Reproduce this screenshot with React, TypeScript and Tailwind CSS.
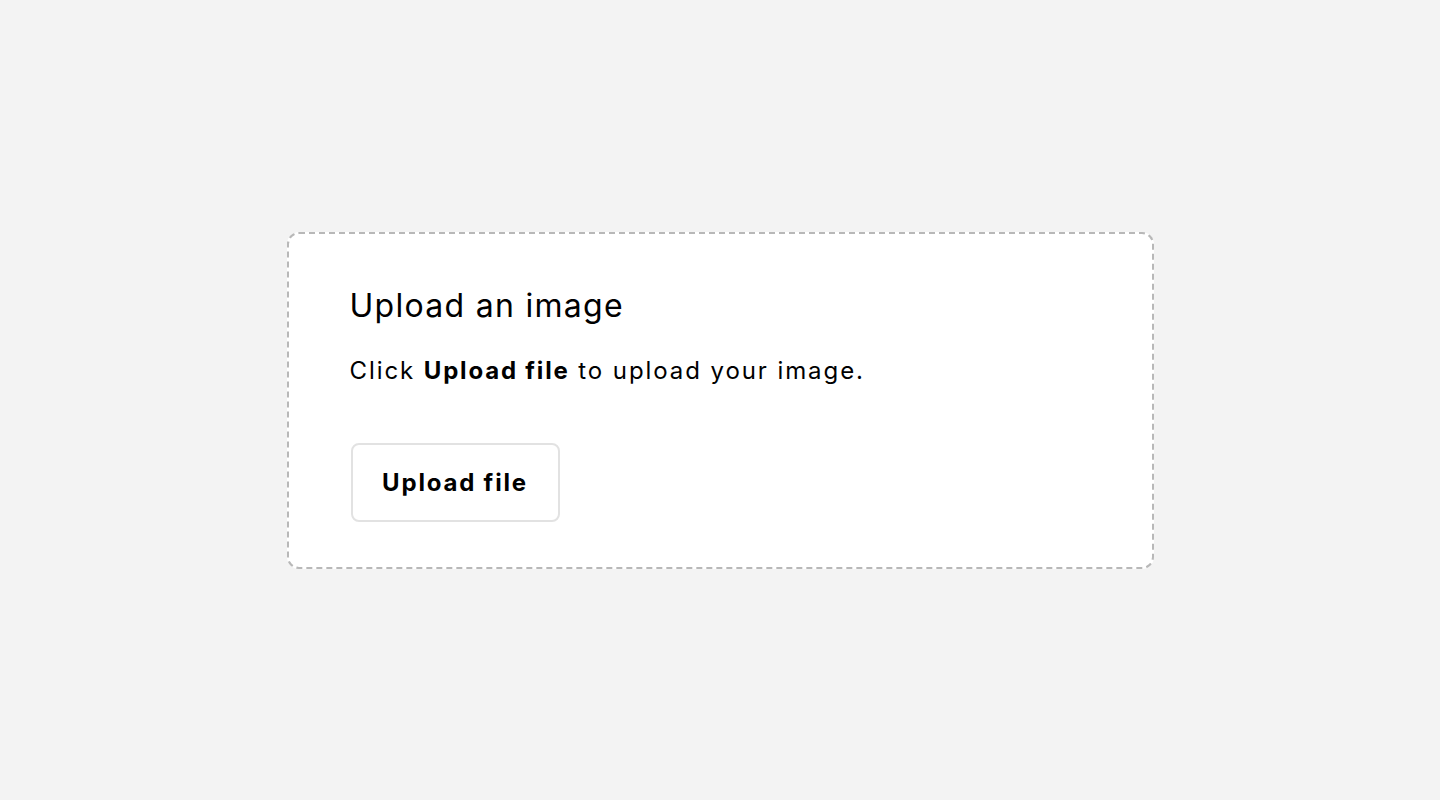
const App = () => {
  return (
    <div className="min-h-screen w-full bg-[#f3f3f3] flex items-center justify-center font-['Inter','Liberation_Sans',sans-serif] text-black">
      <section className="w-[867px] h-[337px] bg-white border-2 border-dashed border-[#b8b8b8] rounded-[12px] px-[62px] pt-[48px] pb-[45px]">
        <h1 className="text-[32px] leading-[48px] font-normal tracking-[0.04em] -ml-px">Upload an image</h1>
        <p className="mt-[23px] text-[24px] leading-[36px] tracking-[0.08em] -ml-px">
          Click <strong className="font-bold tracking-[0.075em]">Upload file</strong> to upload your image.
        </p>
        <button className="mt-[54px] h-[79px] w-[209px] border-2 border-[#e2e2e2] rounded-[8px] bg-white text-[24px] font-bold leading-[36px] pt-[1px] tracking-[0.075em]">
          Upload file
        </button>
      </section>
    </div>
  );
};

export default App;
